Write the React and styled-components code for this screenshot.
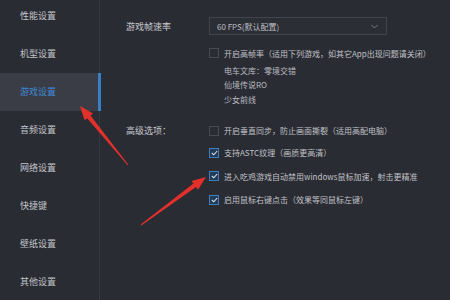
import styled, { createGlobalStyle } from "styled-components";

const GlobalStyle = createGlobalStyle`
  html, body {
    margin: 0;
    padding: 0;
    background: #2a2c33;
  }
  body {
    font-family: "Noto Sans CJK SC", "Noto Sans", sans-serif;
    color: #c3c5ca;
  }
`;

const Window = styled.div`
  position: relative;
  width: 450px;
  height: 300px;
  overflow: hidden;
  display: flex;
  background: #2a2c33;
`;

const Sidebar = styled.nav`
  width: 99px;
  flex-shrink: 0;
  border-right: 1px solid #363840;
  display: flex;
  flex-direction: column;
  margin-top: -3px;
`;

const MenuItem = styled.div`
  position: relative;
  height: 38px;
  display: flex;
  align-items: center;
  padding-left: 20px;
  font-size: 9px;
  color: ${(p) => (p.$active ? "#3e8ad6" : "#c2c4c9")};
  background: ${(p) => (p.$active ? "#3a3d45" : "transparent")};

  &::after {
    content: "";
    display: ${(p) => (p.$active ? "block" : "none")};
    position: absolute;
    right: -2px;
    top: 0;
    bottom: 0;
    width: 3px;
    background: #3a7fc6;
  }
`;

const Content = styled.main`
  flex: 1;
  padding: 17px 0 0 26px;
  display: grid;
  grid-template-columns: 83px 1fr;
  align-content: start;
  row-gap: 0;
`;

const Label = styled.div`
  font-size: 9px;
  color: #c8cacf;
  height: ${(p) => p.$h || "auto"};
  display: flex;
  align-items: ${(p) => (p.$top ? "flex-start" : "center")};
  padding-top: ${(p) => p.$pt || 0};
`;

const Select = styled.div`
  width: 178px;
  height: 18px;
  box-sizing: border-box;
  border: 1px solid #41444c;
  background: #2c2e35;
  display: flex;
  align-items: center;
  justify-content: space-between;
  padding: 0 8px 0 7px;
  font-size: 8px;
  color: #bcbec3;
`;

const Group = styled.div`
  display: flex;
  flex-direction: column;
  margin-top: ${(p) => p.$mt || 0};
`;

const Row = styled.div`
  display: flex;
  align-items: center;
  gap: 5px;
  height: ${(p) => p.$h || "22px"};
  font-size: 8px;
  color: #c0c2c7;
  white-space: nowrap;
`;

const Box = styled.span`
  width: 10px;
  height: 10px;
  box-sizing: border-box;
  flex-shrink: 0;
  border: 1px solid ${(p) => (p.$checked ? "#3f7fc0" : "#484b53")};
  background: ${(p) => (p.$checked ? "#233a55" : "transparent")};
  display: flex;
  align-items: center;
  justify-content: center;
`;

const SubLine = styled.div`
  padding-left: 15px;
  height: 14.5px;
  display: flex;
  align-items: center;
  font-size: 8px;
  color: #b9bbc0;
`;

const Overlay = styled.svg`
  position: absolute;
  left: 0;
  top: 0;
  pointer-events: none;
`;

function arrowPoints(tail, tip, head = 14, headW = 5.5, tailW = 0.5, shaftW = 2.2) {
  const dx = tip[0] - tail[0];
  const dy = tip[1] - tail[1];
  const len = Math.hypot(dx, dy);
  const ux = dx / len;
  const uy = dy / len;
  const nx = -uy;
  const ny = ux;
  const bx = tip[0] - ux * head;
  const by = tip[1] - uy * head;
  const pts = [
    [tail[0] + nx * tailW, tail[1] + ny * tailW],
    [bx + nx * shaftW, by + ny * shaftW],
    [bx + nx * headW, by + ny * headW],
    tip,
    [bx - nx * headW, by - ny * headW],
    [bx - nx * shaftW, by - ny * shaftW],
    [tail[0] - nx * tailW, tail[1] - ny * tailW],
  ];
  return pts.map((p) => p.join(",")).join(" ");
}

const Check = () => (
  <svg width="7" height="6" viewBox="0 0 7 6">
    <path d="M0.8 3 L2.8 4.8 L6.2 1" stroke="#d7e4f2" strokeWidth="1.1" fill="none" />
  </svg>
);

const menu = ["性能设置", "机型设置", "游戏设置", "音频设置", "网络设置", "快捷键", "壁纸设置", "其他设置"];

const options = [
  { text: "开启垂直同步，防止画面撕裂（适用高配电脑）", checked: false },
  { text: "支持ASTC纹理（画质更高清）", checked: true },
  { text: "进入吃鸡游戏自动禁用windows鼠标加速，射击更精准", checked: true },
  { text: "启用鼠标右键点击（效果等同鼠标左键）", checked: true },
];

export default function App() {
  return (
    <>
      <GlobalStyle />
      <Window>
        <Sidebar>
          {menu.map((m) => (
            <MenuItem key={m} $active={m === "游戏设置"}>
              {m}
            </MenuItem>
          ))}
        </Sidebar>
        <Content>
          <Label $h="18px">游戏帧速率</Label>
          <Select>
            <span>60 FPS(默认配置)</span>
            <svg width="7" height="5" viewBox="0 0 7 5">
              <path d="M0.5 1 L3.5 4 L6.5 1" stroke="#7c7f87" strokeWidth="1" fill="none" />
            </svg>
          </Select>

          <div />
          <Group $mt="8px">
            <Row $h="20px">
              <Box />
              开启高帧率（适用下列游戏，如其它App出现问题请关闭）
            </Row>
            <SubLine>电车文库：零境交错</SubLine>
            <SubLine>仙境传说RO</SubLine>
            <SubLine>少女前线</SubLine>
          </Group>

          <Label $h="22px" style={{ marginTop: "13px" }}>高级选项：</Label>
          <Group $mt="13px">
            {options.map((o) => (
              <Row key={o.text} $h={o.text.startsWith("进入") ? "25px" : "22px"}>
                <Box $checked={o.checked}>{o.checked && <Check />}</Box>
                {o.text}
              </Row>
            ))}
          </Group>
        </Content>

        <Overlay width="450" height="300">
          <polygon points={arrowPoints([128, 165], [80, 106])} fill="#e3302a" />
          <polygon points={arrowPoints([141, 225], [206, 177])} fill="#e3302a" />
        </Overlay>
      </Window>
    </>
  );
}
